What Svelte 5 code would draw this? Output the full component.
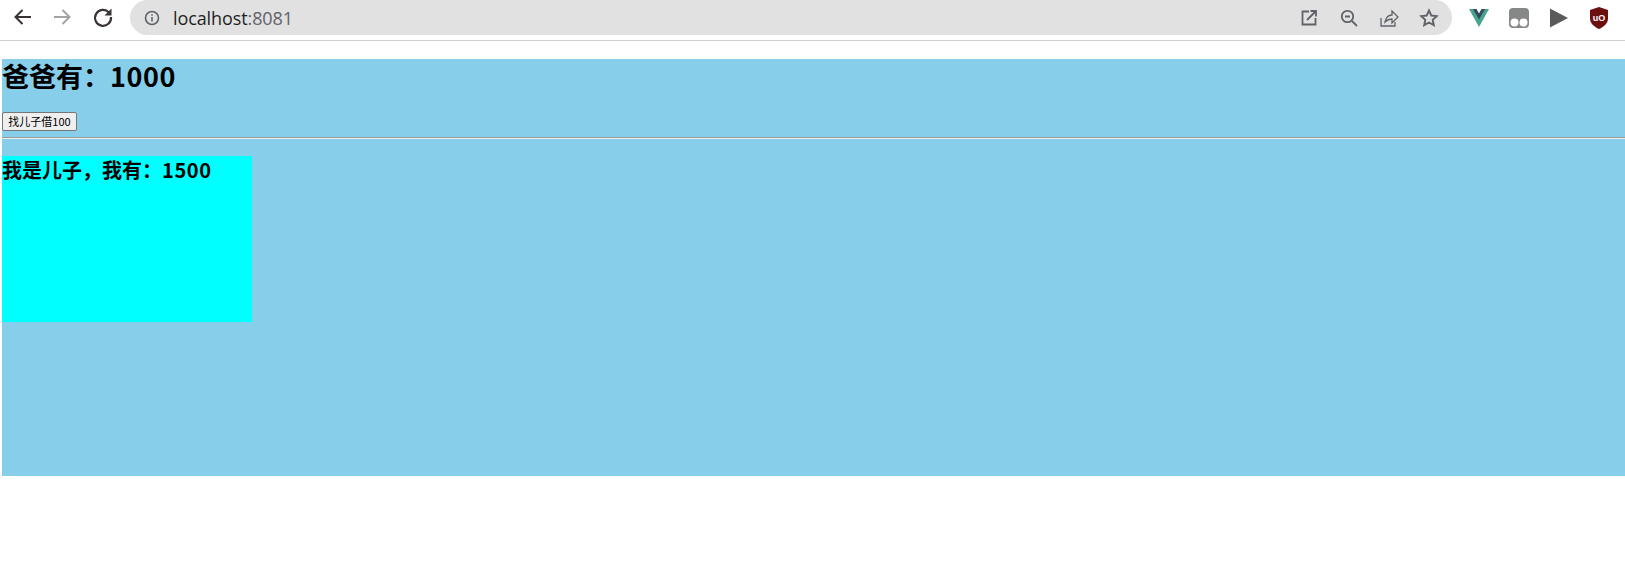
<script>
  const father = 1000;
  const son = 1500;
</script>

<div class="chrome">
  <div class="nav">
    <svg width="24" height="24" viewBox="0 0 24 24" fill="none" stroke="#3a3335" stroke-width="2"><path d="M20 12H4.500M11.500 5l-7 7 7 7"/></svg>
    <svg width="24" height="24" viewBox="0 0 24 24" fill="none" stroke="#a3a3a3" stroke-width="2"><path d="M3 12h15.500M11.500 5l7 7-7 7"/></svg>
    <svg width="24" height="24" viewBox="0 0 24 24" fill="none" stroke="#3a3335" stroke-width="2.200"><path d="M18 7.500A8 8 0 1 0 20 12"/><path d="M20.500 3.500v7h-7z" fill="#3a3335" stroke="none"/></svg>
  </div>
  <div class="omni">
    <svg class="info" width="16" height="16" viewBox="0 0 16 16" fill="none" stroke="#5f6368" stroke-width="1.600"><circle cx="8" cy="8" r="6.500"/><path d="M8 7v4.500M8 4.200v1.600"/></svg>
    <span class="url">localhost<span class="port">:8081</span></span>
    <div class="omni-icons">
      <svg width="20" height="20" viewBox="0 0 20 20" fill="none" stroke="#5f6368" stroke-width="1.800"><path d="M10 3.500H3.500v13h13V10M8 12l8.500-8.500M11.500 3h5.500v5.500"/></svg>
      <svg width="20" height="20" viewBox="0 0 20 20" fill="none" stroke="#5f6368" stroke-width="1.800"><circle cx="8.500" cy="8.500" r="5.700"/><path d="M6 8.500h5M13 13l5 5"/></svg>
      <svg width="20" height="20" viewBox="0 0 20 20" fill="none" stroke="#5f6368" stroke-width="1.300"><path d="M2 10v8h14v-4M6 14c1-5 4-7 7-7V3l6 6-6 6v-4c-3 0-5 1-7 3z"/></svg>
      <svg width="20" height="20" viewBox="0 0 20 20" fill="none" stroke="#5f6368" stroke-width="1.900"><path d="M10 2.500l2.300 5 5.400.6-4 3.700 1.100 5.400-4.800-2.700-4.800 2.700 1.100-5.400-4-3.700 5.400-.6z"/></svg>
    </div>
  </div>
  <div class="exts">
    <svg width="20" height="20" viewBox="0 0 20 20"><path d="M0 1h20L10 19z" fill="#47a58e"/><path d="M4 1h12l-6 10.500z" fill="#35495e"/><path d="M7.500 1h5L10 5.500z" fill="#fff"/></svg>
    <svg width="20" height="20" viewBox="0 0 20 20"><rect width="20" height="20" y="0" rx="4" fill="#858887"/><circle cx="5.500" cy="14.500" r="4" fill="#fff"/><circle cx="14.500" cy="14.500" r="4" fill="#fff"/></svg>
    <svg width="20" height="20" viewBox="0 0 20 20"><path d="M1 0.500l18 9.500-18 9.500z" fill="#5a5a5a"/></svg>
    <svg width="20" height="22" viewBox="0 0 20 22"><path d="M10 0l9 3v8.500c0 5-4.500 8.500-9 10.500-4.500-2-9-5.500-9-10.500V3z" fill="#6d0f0f"/><text x="10" y="14" class="ublock">uO</text></svg>
  </div>
</div>

<main class="father">
  <h1>爸爸有：<span class="num">{father}</span></h1>
  <button>找儿子借100</button>
  <hr />
  <div class="son">
    <h2>我是儿子，我有：<span class="num">{son}</span></h2>
  </div>
</main>

<style>
  :global(body) {
    margin: 0;
    background: #fff;
    font-family: "Liberation Sans", "Noto Sans CJK SC", sans-serif;
  }
  .chrome {
    height: 40px;
    border-bottom: 1px solid #d0d0d0;
    display: flex;
    align-items: flex-start;
    margin-bottom: 18px;
  }
  .nav {
    display: flex;
    gap: 16px;
    padding: 5px 0 0 11px;
    width: 119px;
    box-sizing: border-box;
    flex: none;
  }
  .omni {
    width: 1322px;
    height: 35px;
    background: #e1e1e1;
    border-radius: 18px;
    margin-left: 11px;
    display: flex;
    align-items: center;
    padding-left: 14px;
    box-sizing: border-box;
    flex: none;
  }
  .url {
    margin-left: 13px;
    font-family: "Open Sans", "Noto Sans", sans-serif;
    font-size: 18px;
    letter-spacing: -0.1px;
    color: #1f1f1f;
  }
  .port { color: #5f6368; }
  .omni-icons {
    margin-left: auto;
    margin-right: 13px;
    display: flex;
    gap: 20px;
  }
  .exts {
    display: flex;
    gap: 20px;
    align-items: center;
    margin-left: 17px;
    height: 35px;
  }
  .ublock {
    font: bold 9px "Liberation Sans", sans-serif;
    fill: #fff;
    text-anchor: middle;
  }
  .father {
    margin-left: 2px;
    height: 417px;
    background: skyblue;
    box-sizing: border-box;
    display: flow-root;
  }
  .num { letter-spacing: 0.6px; }
  h1 {
    margin: 0 0 19px;
    font-size: 27px;
    line-height: 34px;
    font-weight: 700;
    color: #000;
    font-family: "Noto Sans CJK SC", sans-serif;
  }
  button {
    display: block;
    width: 75px;
    height: 19px;
    padding: 0;
    font-size: 11px;
    font-family: "Noto Sans CJK SC", sans-serif;
    background: #efefef;
    border: 1px solid #767676;
    border-radius: 2px;
    color: #000;
    line-height: 1;
  }
  hr {
    margin: 6px 0 17px;
    border: 0;
    border-top: 1px solid #9a9a9a;
    border-bottom: 1px solid #eee;
  }
  .son {
    width: 250px;
    height: 166px;
    background: #0ff;
  }
  h2 {
    margin: 0;
    font-size: 20px;
    line-height: 28px;
    font-weight: 700;
    font-family: "Noto Sans CJK SC", sans-serif;
    white-space: nowrap;
  }
</style>
